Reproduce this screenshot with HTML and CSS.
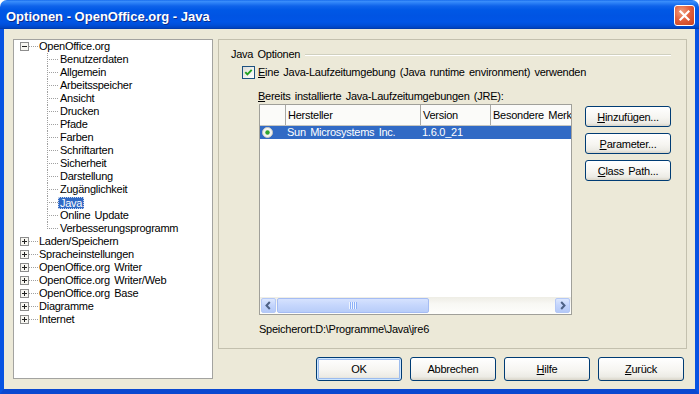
FILE: index.html
```html
<!DOCTYPE html>
<html lang="de">
<head>
<meta charset="utf-8">
<title>Optionen - OpenOffice.org - Java</title>
<link rel="stylesheet" href="styles.css">
</head>
<body>
<div class="window">
  <div class="titlebar">
    <span class="title">Optionen - OpenOffice.org - Java</span>
    <span class="close" aria-label="Schließen">
      <svg width="19" height="19" viewBox="0 0 19 19"><path d="M5.5 5.5L13.5 13.5M13.5 5.5L5.5 13.5" stroke="#fff" stroke-width="2.2" stroke-linecap="square"/></svg>
    </span>
  </div>
  <div class="client">
    <div class="tree">
      <div class="node root"><svg class="exp" viewBox="0 0 9 9"><rect x="0.5" y="0.5" width="8" height="8" fill="#f7f6f1" stroke="#8d8d8d"/><path d="M2 4.5h5" stroke="#222"/></svg><span class="hline"></span><span class="label">OpenOffice.org</span></div>
      <div class="node child"><span class="guide"></span><span class="label">Benutzerdaten</span></div>
      <div class="node child"><span class="guide"></span><span class="label">Allgemein</span></div>
      <div class="node child"><span class="guide"></span><span class="label">Arbeitsspeicher</span></div>
      <div class="node child"><span class="guide"></span><span class="label">Ansicht</span></div>
      <div class="node child"><span class="guide"></span><span class="label">Drucken</span></div>
      <div class="node child"><span class="guide"></span><span class="label">Pfade</span></div>
      <div class="node child"><span class="guide"></span><span class="label">Farben</span></div>
      <div class="node child"><span class="guide"></span><span class="label">Schriftarten</span></div>
      <div class="node child"><span class="guide"></span><span class="label">Sicherheit</span></div>
      <div class="node child"><span class="guide"></span><span class="label">Darstellung</span></div>
      <div class="node child"><span class="guide"></span><span class="label">Zugänglichkeit</span></div>
      <div class="node child"><span class="guide"></span><span class="label sel">Java</span></div>
      <div class="node child"><span class="guide"></span><span class="label">Online Update</span></div>
      <div class="node child last"><span class="guide"></span><span class="label">Verbesserungsprogramm</span></div>
      <div class="node root"><svg class="exp" viewBox="0 0 9 9"><rect x="0.5" y="0.5" width="8" height="8" fill="#f7f6f1" stroke="#8d8d8d"/><path d="M2 4.5h5M4.5 2v5" stroke="#222"/></svg><span class="hline"></span><span class="label">Laden/Speichern</span></div>
      <div class="node root"><svg class="exp" viewBox="0 0 9 9"><rect x="0.5" y="0.5" width="8" height="8" fill="#f7f6f1" stroke="#8d8d8d"/><path d="M2 4.5h5M4.5 2v5" stroke="#222"/></svg><span class="hline"></span><span class="label">Spracheinstellungen</span></div>
      <div class="node root"><svg class="exp" viewBox="0 0 9 9"><rect x="0.5" y="0.5" width="8" height="8" fill="#f7f6f1" stroke="#8d8d8d"/><path d="M2 4.5h5M4.5 2v5" stroke="#222"/></svg><span class="hline"></span><span class="label">OpenOffice.org Writer</span></div>
      <div class="node root"><svg class="exp" viewBox="0 0 9 9"><rect x="0.5" y="0.5" width="8" height="8" fill="#f7f6f1" stroke="#8d8d8d"/><path d="M2 4.5h5M4.5 2v5" stroke="#222"/></svg><span class="hline"></span><span class="label">OpenOffice.org Writer/Web</span></div>
      <div class="node root"><svg class="exp" viewBox="0 0 9 9"><rect x="0.5" y="0.5" width="8" height="8" fill="#f7f6f1" stroke="#8d8d8d"/><path d="M2 4.5h5M4.5 2v5" stroke="#222"/></svg><span class="hline"></span><span class="label">OpenOffice.org Base</span></div>
      <div class="node root"><svg class="exp" viewBox="0 0 9 9"><rect x="0.5" y="0.5" width="8" height="8" fill="#f7f6f1" stroke="#8d8d8d"/><path d="M2 4.5h5M4.5 2v5" stroke="#222"/></svg><span class="hline"></span><span class="label">Diagramme</span></div>
      <div class="node root"><svg class="exp" viewBox="0 0 9 9"><rect x="0.5" y="0.5" width="8" height="8" fill="#f7f6f1" stroke="#8d8d8d"/><path d="M2 4.5h5M4.5 2v5" stroke="#222"/></svg><span class="hline"></span><span class="label">Internet</span></div>
    </div>

    <div class="right">
      <div class="page">
        <div class="group-title"><span>Java Optionen</span><span class="rule"></span></div>
        <div class="group-body">
          <div class="check-row">
            <span class="checkbox"><svg width="11" height="11" viewBox="0 0 11 11"><path d="M2.3 5.2L4.4 7.4L8.7 2.9" fill="none" stroke="#21a121" stroke-width="1.9"/></svg></span>
            <span class="check-label"><u>E</u>ine Java-Laufzeitumgebung (Java runtime environment) verwenden</span>
          </div>
          <div class="list-label"><u>B</u>ereits installierte Java-Laufzeitumgebungen (JRE):</div>
          <div class="list-row">
            <div class="table">
              <div class="thead">
                <div class="th"></div>
                <div class="th">Hersteller</div>
                <div class="th">Version</div>
                <div class="th last">Besondere Merk</div>
              </div>
              <div class="tr selected">
                <div class="td radio-cell"><svg width="11" height="11" viewBox="0 0 11 11"><circle cx="5.5" cy="5.5" r="5" fill="#f4f4f0" stroke="#c9c9c0"/><circle cx="5.5" cy="5.5" r="2.2" fill="#2fa52f"/></svg></div>
                <div class="td">Sun Microsystems Inc.</div>
                <div class="td">1.6.0_21</div>
                <div class="td"></div>
              </div>
              <div class="tbody-fill"></div>
              <div class="hscroll">
                <span class="sbtn"><svg width="15" height="15" viewBox="0 0 15 15"><path d="M8.8 4L5.5 7.5L8.8 11" fill="none" stroke="#4d6185" stroke-width="2"/></svg></span>
                <span class="thumb"><span class="grip"></span></span>
                <span class="track"></span>
                <span class="sbtn"><svg width="15" height="15" viewBox="0 0 15 15"><path d="M6.2 4L9.5 7.5L6.2 11" fill="none" stroke="#4d6185" stroke-width="2"/></svg></span>
              </div>
            </div>
            <div class="side-buttons">
              <button class="btn small"><u>H</u>inzufügen...</button>
              <button class="btn small"><u>P</u>arameter...</button>
              <button class="btn small"><u>C</u>lass Path...</button>
            </div>
          </div>
          <div class="location">Speicherort:D:\Programme\Java\jre6</div>
        </div>
      </div>
      <div class="dialog-buttons">
        <button class="btn default">OK</button>
        <button class="btn">Abbrechen</button>
        <button class="btn"><u>H</u>ilfe</button>
        <button class="btn"><u>Z</u>urück</button>
      </div>
    </div>
  </div>
</div>
</body>
</html>
```

FILE: styles.css
```css
* { box-sizing: border-box; }

body {
  margin: 0;
  background: #ffffff;
  font-family: "Liberation Sans", Arial, sans-serif;
  font-size: 11px;
  letter-spacing: -0.25px;
  word-spacing: 1.5px;
  color: #000;
}

.window {
  width: 699px;
  height: 394px;
  display: flex;
  flex-direction: column;
}

/* ---------- title bar ---------- */
.titlebar {
  height: 29px;
  flex: none;
  display: flex;
  align-items: flex-start;
  padding: 0 4px 0 6px;
  border-radius: 7px 7px 0 0;
  background: linear-gradient(to bottom,
    #0a5fe8 0px, #3d90fb 1px, #2b80f6 3px, #0f63ea 6px,
    #0058e6 10px, #0054e3 16px, #0055e6 22px, #004fd9 25px, #0043c0 28px, #00369f 29px);
}

.title {
  flex: 1;
  margin-top: 8px;
  color: #fff;
  font-weight: bold;
  font-size: 13px;
  letter-spacing: 0;
  word-spacing: 0;
  line-height: 17px;
  text-shadow: 1px 1px 0 #0a2a8a;
  white-space: nowrap;
}

.close {
  margin-top: 5px;
  width: 21px;
  height: 21px;
  border: 1px solid #fff;
  border-radius: 3px;
  background: radial-gradient(circle at 35% 30%, #f0a080 0%, #e2613f 45%, #c9401c 100%);
  display: flex;
  align-items: center;
  justify-content: center;
}

/* ---------- client ---------- */
.client {
  flex: 1;
  display: flex;
  align-items: flex-start;
  gap: 5px;
  padding: 10px 8px 0 9px;
  background: #ece9d8;
  border-left: 4px solid #0753e2;
  border-right: 4px solid #0753e2;
  border-bottom: 5px solid #0a48d0;
}

/* ---------- tree ---------- */
.tree {
  width: 200px;
  height: 340px;
  flex: none;
  background: #fff;
  border: 1px solid #a3a3a0;
  overflow: hidden;
}

.node {
  height: 13px;
  line-height: 13px;
  display: flex;
  align-items: center;
  white-space: nowrap;
}

.root { padding-left: 6px; }

.exp {
  width: 9px;
  height: 9px;
  flex: none;
  display: block;
}

.hline {
  width: 10px;
  height: 1px;
  margin-right: 0;
  flex: none;
  background: repeating-linear-gradient(to right, #a0a0a0 0 1px, transparent 1px 2px);
}

.child { padding-left: 33px; }

.guide {
  width: 11px;
  height: 13px;
  flex: none;
  background:
    repeating-linear-gradient(to right, #a0a0a0 0 1px, transparent 1px 2px) 0 6px / 11px 1px no-repeat,
    repeating-linear-gradient(to bottom, #a0a0a0 0 1px, transparent 1px 2px) 0 0 / 1px 13px no-repeat;
}

.last .guide {
  background-size: 11px 1px, 1px 7px;
}

.child .label { padding: 0 2px; }

.label.sel {
  background: #316ac5;
  color: #fff;
  line-height: 12px;
  outline: 1px dotted #c5d4ee;
  outline-offset: -1px;
}

/* ---------- right side ---------- */
.right {
  width: 469px;
  flex: none;
  display: flex;
  flex-direction: column;
}

.page {
  height: 310px;
  border: 1px solid #c3c0ae;
  padding: 8px 15px 0 12px;
}

.group-title {
  height: 13px;
  line-height: 13px;
  display: flex;
  align-items: center;
}

.rule {
  flex: 1;
  margin-left: 5px;
  height: 2px;
  border-top: 1px solid #d0d0bf;
  border-bottom: 1px solid #ffffff;
}

.group-body { margin-left: 11px; }

.check-row {
  margin-top: 5px;
  height: 13px;
  display: flex;
  align-items: center;
}

.checkbox {
  width: 13px;
  height: 13px;
  flex: none;
  border: 1px solid #1c5180;
  background: linear-gradient(135deg, #dcdcd7 0%, #f3f3ef 60%, #ffffff 100%);
  display: flex;
}

.check-label {
  margin-left: 3px;
  line-height: 13px;
  white-space: nowrap;
}

.list-label {
  margin-top: 11px;
  padding-left: 16px;
  line-height: 13px;
  white-space: nowrap;
}

.list-row {
  margin-top: 1px;
  margin-left: 17px;
  display: flex;
  align-items: flex-start;
}

.table {
  width: 313px;
  height: 211px;
  flex: none;
  border: 1px solid #a0a09a;
  background: #fff;
  display: flex;
  flex-direction: column;
  overflow: hidden;
}

.thead, .tr {
  display: grid;
  grid-template-columns: 26px 135px 70px 1fr;
  white-space: nowrap;
}

.thead {
  height: 21px;
  flex: none;
  background: #fbfbf9;
  border-bottom: 1px solid #c6c6c0;
}

.th {
  line-height: 20px;
  padding-left: 2px;
  border-right: 1px solid #a9a9a4;
  overflow: hidden;
}

.th.last { border-right: none; }

.tr {
  height: 13px;
  line-height: 12px;
  flex: none;
}

.tr.selected {
  background: #316ac5;
  color: #fff;
}

.td { overflow: hidden; padding-left: 1px; }

.radio-cell {
  padding-left: 2px;
  display: flex;
  align-items: center;
}

.tbody-fill { flex: 1; }

.hscroll {
  height: 17px;
  flex: none;
  display: flex;
  background: linear-gradient(to bottom, #eeede5, #f8f8f4 40%, #fefefb);
}

.sbtn {
  width: 15px;
  height: 15px;
  margin: 1px;
  flex: none;
  border: 1px solid #b4c8f6;
  border-radius: 2px;
  background: linear-gradient(to bottom, #dce7fe, #c3d4fc 50%, #b4c9f7);
  display: flex;
}

.sbtn svg { margin: -1px; }

.thumb {
  width: 152px;
  height: 15px;
  margin: 1px 0;
  flex: none;
  border: 1px solid #a5bcf3;
  border-radius: 2px;
  background: linear-gradient(to bottom, #d6e2fe, #c5d6fc 50%, #b8cdf9);
  display: flex;
  align-items: center;
  justify-content: center;
}

.grip {
  width: 8px;
  height: 7px;
  background: repeating-linear-gradient(to right, #eef4fe 0 1px, #8cb0f8 1px 2px);
}

.track { flex: 1; }

.side-buttons {
  margin-left: 13px;
  margin-top: 2px;
  display: flex;
  flex-direction: column;
  gap: 6px;
}

.location {
  margin-top: 8px;
  padding-left: 17px;
  line-height: 13px;
  white-space: nowrap;
}

/* ---------- buttons ---------- */
.btn {
  width: 86px;
  height: 24px;
  padding: 0;
  border: 1px solid #003c74;
  border-radius: 3px;
  background: linear-gradient(to bottom, #ffffff 0%, #f6f5f1 55%, #ecebe5 85%, #d9d5c9 100%);
  font-family: inherit;
  font-size: 11px;
  letter-spacing: -0.25px;
  word-spacing: 1.5px;
  color: #000;
  text-align: center;
  line-height: 20px;
  white-space: nowrap;
}

.btn.small { height: 21px; line-height: 18px; }

.btn.default {
  box-shadow: inset 0 0 0 1px #cee7ff, inset 0 0 0 2px #9cbcee;
}

.dialog-buttons {
  margin-top: 8px;
  padding-right: 3px;
  display: flex;
  justify-content: flex-end;
  gap: 8px;
}
```
